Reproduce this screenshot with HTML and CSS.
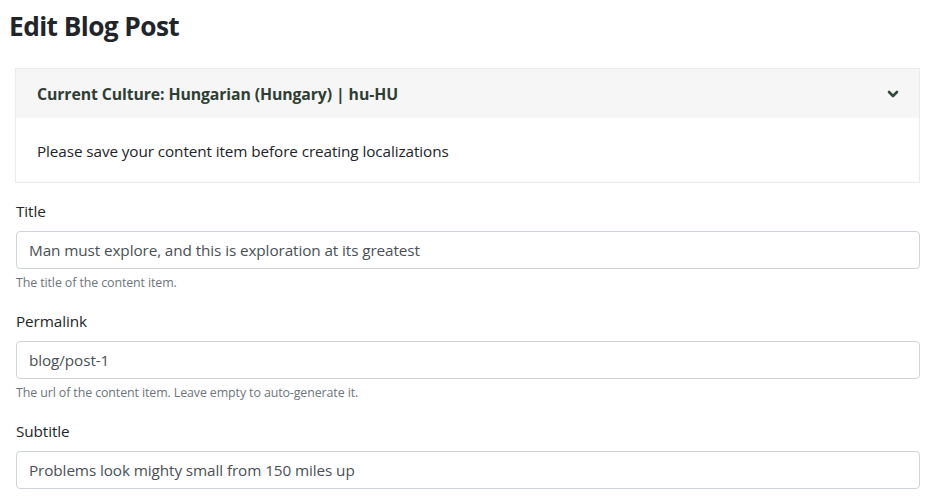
FILE: index.html
```html
<!DOCTYPE html>
<html>
<head>
<meta charset="utf-8">
<link rel="stylesheet" href="styles.css">
</head>
<body>
<div class="page">
  <h1 class="page-title">Edit Blog Post</h1>
  <div class="card">
    <div class="card-header">
      <span class="card-title">Current Culture: Hungarian (Hungary) | hu-HU</span>
      <svg class="chevron" width="12" height="10" viewBox="0 0 12 10"><path d="M2 3 L6 7 L10 3" fill="none" stroke="#2f4a3a" stroke-width="2.6" stroke-linecap="round" stroke-linejoin="round"/></svg>
    </div>
    <div class="card-body">Please save your content item before creating localizations</div>
  </div>
  <div class="field">
    <label class="label">Title</label>
    <div class="input">Man must explore, and this is exploration at its greatest</div>
    <div class="help">The title of the content item.</div>
  </div>
  <div class="field">
    <label class="label">Permalink</label>
    <div class="input">blog/post-1</div>
    <div class="help">The url of the content item. Leave empty to auto-generate it.</div>
  </div>
  <div class="field">
    <label class="label">Subtitle</label>
    <div class="input">Problems look mighty small from 150 miles up</div>
  </div>
</div>
</body>
</html>
```
FILE: styles.css
```css
html, body { margin: 0; padding: 0; background: #fff; }
body { font-family: "Open Sans", "Noto Sans", sans-serif; color: #212529; }
.page { padding: 0 11px 0 16px; }
.page-title {
  margin: 0 0 0 -7px;
  padding-top: 9px;
  height: 68px;
  box-sizing: border-box;
  font-size: 26.3px;
  font-weight: 700;
  letter-spacing: -0.6px;
  line-height: 34px;
  color: #212529;
}
.card {
  margin-left: -1px;
  border: 1px solid #e9ecef;
}
.card-header {
  height: 49px;
  background: #f6f6f6;
  display: flex;
  align-items: center;
  justify-content: space-between;
  padding: 0 20px 0 21px;
}
.card-title { font-size: 15.8px; font-weight: 700; color: #2f3e35; letter-spacing: -0.1px; }
.chevron { display: block; }
.card-body {
  height: 64px;
  box-sizing: border-box;
  padding: 22px 21px 0;
  font-size: 15.3px;
  line-height: 22px;
  color: #212529;
  letter-spacing: -0.1px;
}
.field { height: 110px; }
.card + .field { height: 130px; padding-top: 20px; box-sizing: border-box; }
.label { display: block; font-size: 15.3px; letter-spacing: -0.1px; line-height: 16px; margin-bottom: 12px; color: #212529; }
.input {
  height: 38px;
  box-sizing: border-box;
  border: 1px solid #ced4da;
  border-radius: 4px;
  padding: 0 12px;
  display: flex;
  align-items: center;
  font-size: 15.3px;
  letter-spacing: -0.1px;
  color: #495057;
}
.help { margin-top: 5px; font-size: 12.4px; line-height: 18px; color: #6c757d; letter-spacing: -0.1px; }
```
